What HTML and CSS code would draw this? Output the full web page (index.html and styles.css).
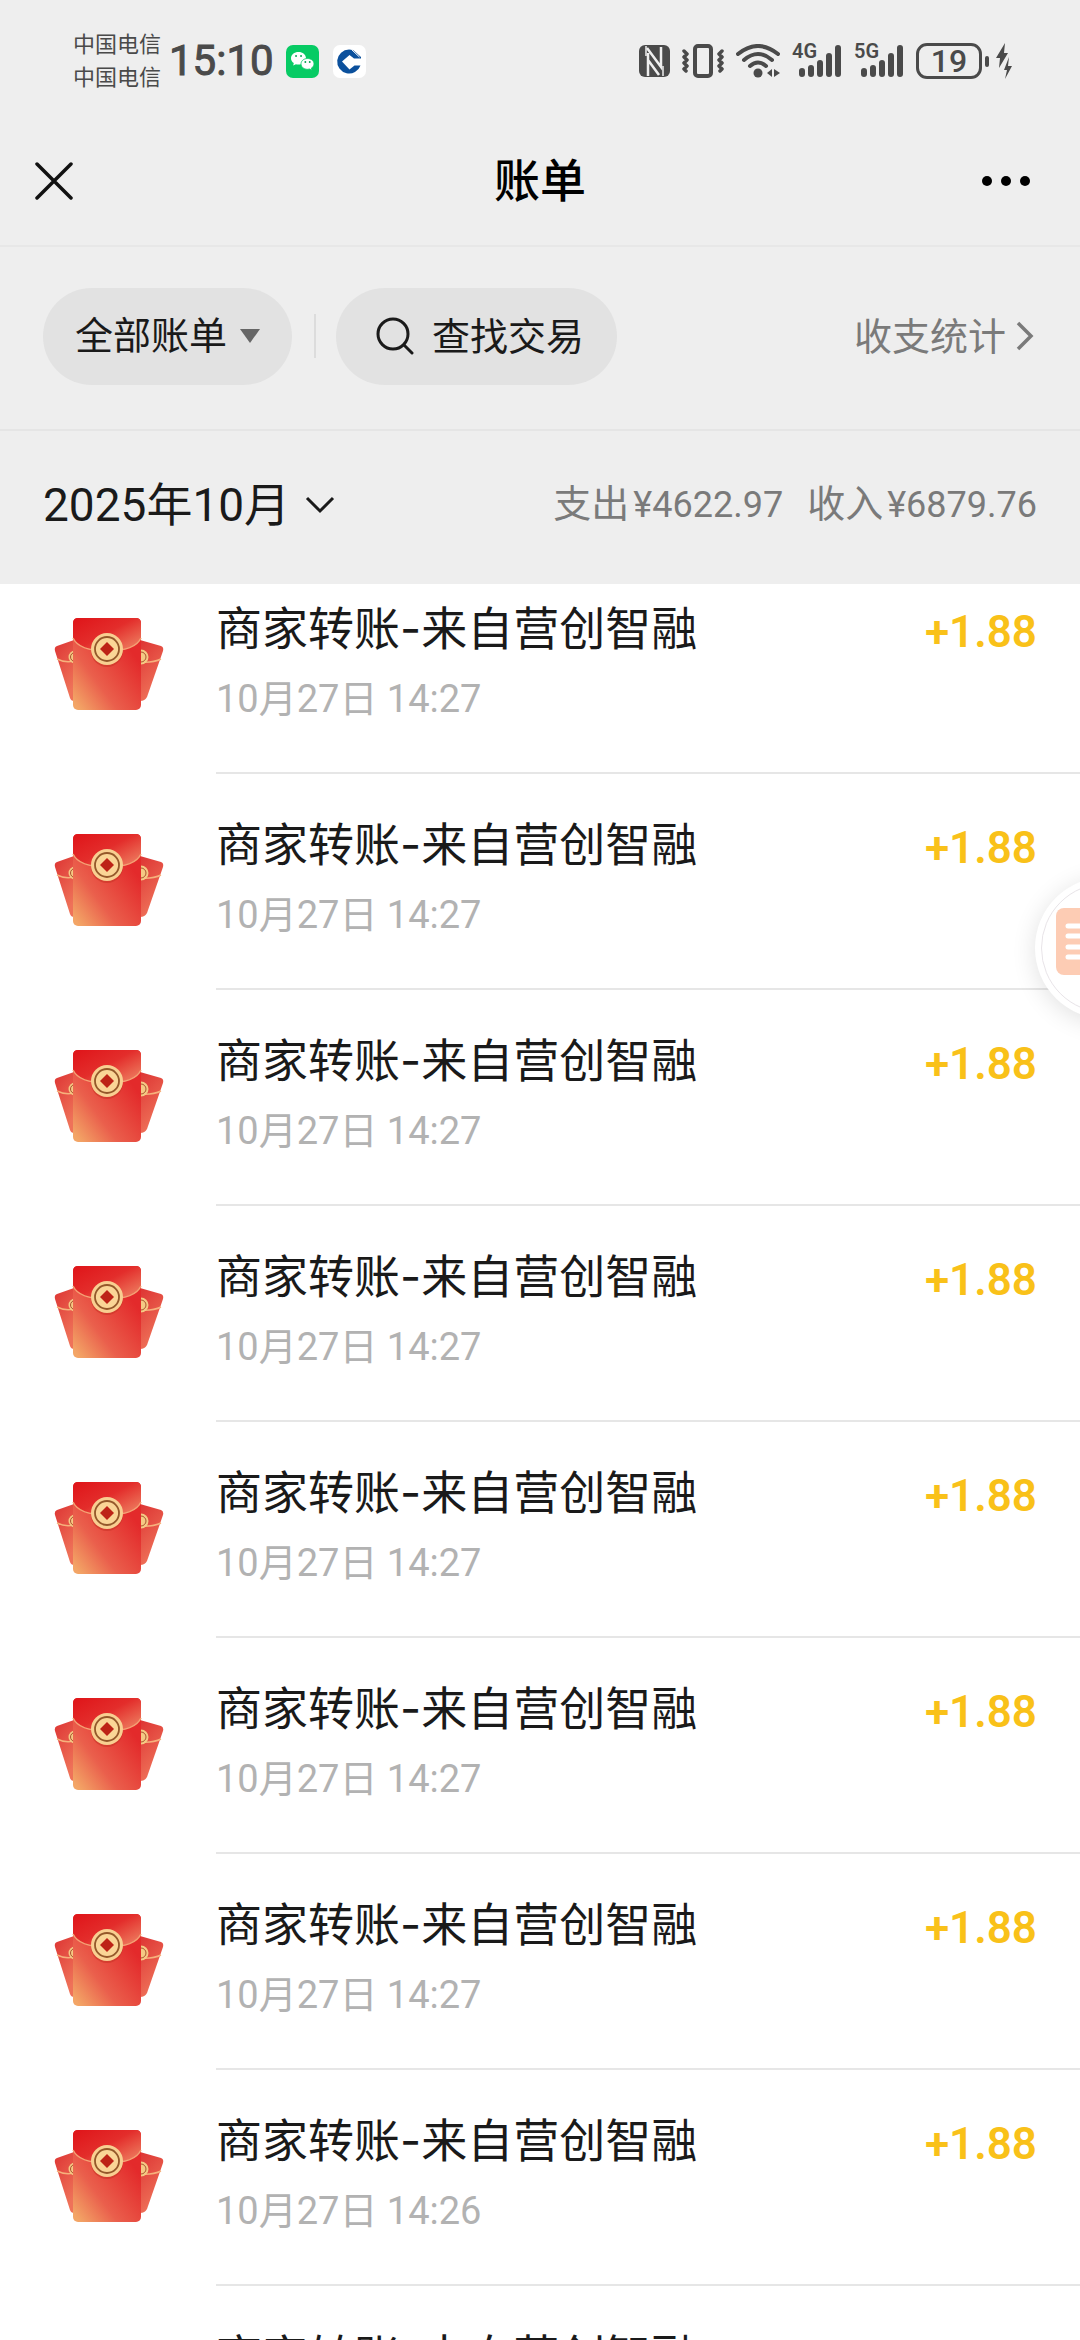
FILE: index.html
```html
<!DOCTYPE html>
<html lang="zh-CN">
<head>
    <meta charset="UTF-8" />
    <meta name="viewport" content="width=device-width, initial-scale=1.0" />
    <title>账单</title>
    <link rel="stylesheet" href="styles.css">
</head>
<body>

<!-- Icona busta rossa, usata in ogni riga -->
<svg class="defs" aria-hidden="true">
    <defs>
        <linearGradient id="body-red" x1="0.1" y1="1" x2="0.8" y2="0.3">
            <stop offset="0" stop-color="#f3a566" />
            <stop offset="0.4" stop-color="#ea5f4c" />
            <stop offset="1" stop-color="#e32a2b" />
        </linearGradient>
        <linearGradient id="flap-red" x1="0" y1="0" x2="1" y2="0.9">
            <stop offset="0" stop-color="#df1419" />
            <stop offset="0.5" stop-color="#e32d2b" />
            <stop offset="1" stop-color="#ee8263" />
        </linearGradient>
        <linearGradient id="side-red" x1="0" y1="0" x2="0.4" y2="1">
            <stop offset="0" stop-color="#dd3433" />
            <stop offset="1" stop-color="#ef7259" />
        </linearGradient>
        <symbol id="envelope" viewBox="0 0 110 92">
            <path d="M3 28 20 22V83Q17 83 16 80L1 33Q0 29 3 28Z" fill="url(#side-red)" />
            <path d="M107 28 86 22V83Q91 83 93 79L109 33Q110 29 107 28Z" fill="url(#side-red)" />
            <path d="M3 41Q11 45 20 43M107 41Q99 45 86 44" fill="none" stroke="#f6b17c" stroke-width="1.5" />
            <circle cx="21" cy="39" r="6.5" fill="#f5c984" />
            <circle cx="21" cy="39" r="4.5" fill="none" stroke="#a8542f" />
            <circle cx="87" cy="39" r="7.5" fill="#f5c984" />
            <circle cx="87" cy="39" r="5" fill="none" stroke="#a8542f" />
            <rect x="19" y="0" width="68" height="92" rx="5" fill="url(#body-red)" />
            <path d="M19 20V5Q19 0 24 0H82Q87 0 87 5V20Q81 33 53 33T19 20Z" fill="url(#flap-red)" />
            <path d="M19 20Q25 33 53 33T87 20" fill="none" stroke="#f4a174" stroke-width="1.5" />
            <circle cx="53" cy="33" r="16" fill="#c93426" opacity="0.6" />
            <circle cx="53" cy="31" r="16" fill="#f8cf91" />
            <circle cx="53" cy="31" r="12" fill="#fad596" stroke="#94582a" stroke-width="1.8" />
            <path d="M53 24 60 31 53 38 46 31Z" fill="#bd2317" />
        </symbol>
        <symbol id="signal" viewBox="0 0 50 36">
            <path d="M10 28V31M19 25V31M28 20V31M37 13V31M46 5V31" stroke="currentColor" stroke-width="6" stroke-linecap="round" />
        </symbol>
    </defs>
</svg>

<header class="header">
    <div class="status-bar">
        <div class="carriers">
            <span>中国电信</span>
            <span>中国电信</span>
        </div>
        <span class="clock">15:10</span>
        <svg class="app-icon" viewBox="0 0 33 33" aria-hidden="true">
            <rect width="33" height="33" rx="7" fill="#07cb64" />
            <path d="M12.5 7C8.3 7 5 9.7 5 13.2c0 2 1.1 3.7 2.8 4.900L7.200 20.500l2.700-1.300a10 10 0 0 0 2.600.3c4.200 0 7.500-2.800 7.500-6.300S16.700 7 12.500 7Z" fill="#fff" />
            <path d="M21.500 13.500c-3.700 0-6.500 2.400-6.500 5.400s2.800 5.400 6.500 5.400c.8 0 1.500-.1 2.200-.3l2.300 1.200-.6-2.100c1.600-1 2.600-2.500 2.600-4.200 0-3-2.800-5.400-6.500-5.400Z" fill="#fff" stroke="#07cb64" stroke-width="0.8" />
            <path d="M10 11h.1M15 11h.1M19.300 17h.1M23.700 17h.1" stroke="#07a552" stroke-width="1.8" stroke-linecap="round" />
        </svg>
        <svg class="app-icon" viewBox="0 0 33 33" aria-hidden="true">
            <rect width="33" height="33" rx="7" fill="#fff" />
            <path d="M16 5A12 12 0 1 0 27.500 21H21.500L16.500 25 9 17 16.500 10.500 21 14H28V12.500L20 5.500Z" transform="translate(0 -0.500)" fill="#0b509c" />
            <path d="M16.500 12 22 17 16.500 22 11 17Z" fill="#fff" />
            <path d="M18.500 4.500 26.500 12" stroke="#fff" stroke-width="1" />
        </svg>
        <div class="status-icons">
            <svg class="nfc" viewBox="0 0 31 32" aria-hidden="true">
                <rect width="31" height="32" rx="6" fill="#4a4a4a" />
                <path d="M7 1V11M24 21V31" stroke="#eee" stroke-width="1.5" />
                <path d="M9 31V8M8 3 22 22V2M9 15 20 30" fill="none" stroke="#eee" stroke-width="2.5" />
            </svg>
            <svg class="vibrate" viewBox="0 0 42 34" aria-hidden="true">
                <g fill="none" stroke="#4a4a4a" stroke-linecap="round" stroke-linejoin="round">
                    <rect x="13" y="2" width="16" height="30" rx="3" stroke-width="4" />
                    <path d="M2 7 5 10 2 13 5 16 2 19 5 22 2 25 4 27M40 7 37 10 40 13 37 16 40 19 37 22 40 25 38 27" stroke-width="3.5" />
                </g>
            </svg>
            <svg class="wifi" viewBox="0 0 44 34" aria-hidden="true">
                <g fill="none" stroke="#4a4a4a" stroke-width="4" stroke-linecap="round">
                    <path d="M2 10Q22-6 42 10" />
                    <path d="M8 16Q22 4 36 16" />
                    <path d="M14 22Q22 15 30 22" />
                </g>
                <circle cx="22" cy="29" r="4.5" fill="#4a4a4a" />
                <path d="M36 25V33L31 29ZM38 25V33L44 29Z" fill="#4a4a4a" />
            </svg>
            <span class="network"><svg aria-hidden="true"><use href="#signal" /></svg><b>4G</b></span>
            <span class="network"><svg aria-hidden="true"><use href="#signal" /></svg><b>5G</b></span>
            <span class="battery">19</span>
            <svg class="bolt" viewBox="0 0 16 36" aria-hidden="true">
                <path d="M9 0 0 15H4L3 25 12 10H8ZM13 14 8 27H11L9 36 16 23H12Z" fill="#4a4a4a" />
            </svg>
        </div>
    </div>

    <div class="nav-bar">
        <button class="icon-button" type="button" aria-label="关闭">
            <svg class="close" viewBox="0 0 38 38"><path d="M2 2 36 36M36 2 2 36" stroke="#111" stroke-width="3.5" stroke-linecap="round" /></svg>
        </button>
        <h1>账单</h1>
        <button class="icon-button" type="button" aria-label="更多">
            <svg class="more" viewBox="0 0 50 12"><circle cx="6" cy="6" r="5" /><circle cx="25" cy="6" r="5" /><circle cx="44" cy="6" r="5" /></svg>
        </button>
    </div>

    <div class="filter-bar">
        <div class="pill">
            <select class="type-select" aria-label="账单类型"><option>全部账单</option></select>
            <svg class="triangle" viewBox="0 0 20 14" aria-hidden="true"><path d="M0 0H20L10 14Z" fill="#666" /></svg>
        </div>
        <span class="divider"></span>
        <button class="pill search" type="button">
            <svg class="search-icon" viewBox="0 0 38 38" aria-hidden="true"><g fill="none" stroke="#1a1a1a" stroke-width="3"><circle cx="17" cy="17" r="15" /><path d="M28 28 36 36" stroke-linecap="round" /></g></svg>
            <span class="label">查找交易</span>
        </button>
        <a class="stats" href="#"><span class="label">收支统计</span><svg class="chevron" viewBox="0 0 18 30" aria-hidden="true"><path d="M2 2 15 15 2 28" fill="none" stroke="#7a7a7a" stroke-width="3.5" /></svg></a>
    </div>

    <div class="month-bar">
        <select class="month-select" aria-label="月份"><option>2025年10月</option></select>
        <svg class="arrow-down" viewBox="0 0 30 18" aria-hidden="true"><path d="M2 2 15 15 28 2" fill="none" stroke="#1a1a1a" stroke-width="3" /></svg>
        <div class="totals">
            <span>支出<span class="money">¥4622.97</span></span>
            <span>收入<span class="money">¥6879.76</span></span>
        </div>
    </div>
</header>

<ul class="bill-list">
    <li class="bill">
        <svg class="envelope" aria-hidden="true"><use href="#envelope" /></svg>
        <div class="info">
            <div class="text"><p class="name">商家转账<span class="dash">-</span>来自营创智融</p><p class="date">10月27日 14:27</p></div>
            <span class="amount">+1.88</span>
        </div>
    </li>
    <li class="bill">
        <svg class="envelope" aria-hidden="true"><use href="#envelope" /></svg>
        <div class="info">
            <div class="text"><p class="name">商家转账<span class="dash">-</span>来自营创智融</p><p class="date">10月27日 14:27</p></div>
            <span class="amount">+1.88</span>
        </div>
    </li>
    <li class="bill">
        <svg class="envelope" aria-hidden="true"><use href="#envelope" /></svg>
        <div class="info">
            <div class="text"><p class="name">商家转账<span class="dash">-</span>来自营创智融</p><p class="date">10月27日 14:27</p></div>
            <span class="amount">+1.88</span>
        </div>
    </li>
    <li class="bill">
        <svg class="envelope" aria-hidden="true"><use href="#envelope" /></svg>
        <div class="info">
            <div class="text"><p class="name">商家转账<span class="dash">-</span>来自营创智融</p><p class="date">10月27日 14:27</p></div>
            <span class="amount">+1.88</span>
        </div>
    </li>
    <li class="bill">
        <svg class="envelope" aria-hidden="true"><use href="#envelope" /></svg>
        <div class="info">
            <div class="text"><p class="name">商家转账<span class="dash">-</span>来自营创智融</p><p class="date">10月27日 14:27</p></div>
            <span class="amount">+1.88</span>
        </div>
    </li>
    <li class="bill">
        <svg class="envelope" aria-hidden="true"><use href="#envelope" /></svg>
        <div class="info">
            <div class="text"><p class="name">商家转账<span class="dash">-</span>来自营创智融</p><p class="date">10月27日 14:27</p></div>
            <span class="amount">+1.88</span>
        </div>
    </li>
    <li class="bill">
        <svg class="envelope" aria-hidden="true"><use href="#envelope" /></svg>
        <div class="info">
            <div class="text"><p class="name">商家转账<span class="dash">-</span>来自营创智融</p><p class="date">10月27日 14:27</p></div>
            <span class="amount">+1.88</span>
        </div>
    </li>
    <li class="bill">
        <svg class="envelope" aria-hidden="true"><use href="#envelope" /></svg>
        <div class="info">
            <div class="text"><p class="name">商家转账<span class="dash">-</span>来自营创智融</p><p class="date">10月27日 14:26</p></div>
            <span class="amount">+1.88</span>
        </div>
    </li>
    <li class="bill">
        <svg class="envelope" aria-hidden="true"><use href="#envelope" /></svg>
        <div class="info">
            <div class="text"><p class="name">商家转账<span class="dash">-</span>来自营创智融</p></div>
        </div>
    </li>
</ul>

<button class="float-button" type="button" aria-label="悬浮窗">
    <svg viewBox="0 0 130 130" aria-hidden="true">
        <circle cx="65" cy="65" r="64.5" fill="#fff" stroke="#e8e4e8" />
        <rect x="15" y="25" width="60" height="67" rx="8" fill="#fdccb4" />
        <path d="M27 43H65M27 53H65M27 64H65M27 74H65" stroke="#fff" stroke-width="5" stroke-linecap="round" />
    </svg>
</button>

</body>
</html>
```
FILE: styles.css
```css
* {
    box-sizing: border-box;
}

body {
    display: flex;
    flex-direction: column;
    height: 100vh;
    margin: 0;
    overflow: hidden;
    background: #fff;
    color: #1a1a1a;
    font-family: Roboto, "Noto Sans CJK SC", sans-serif;
    font-size: 38px;
}

button,
select {
    margin: 0;
    padding: 0;
    border: 0;
    background: none;
    color: inherit;
    font: inherit;
    appearance: none;
}

svg {
    display: block;
    flex: none;
}

.defs {
    position: absolute;
    width: 0;
    height: 0;
}

.header {
    position: relative;
    z-index: 1;
    flex: none;
    background: #eee;
}

/* Barra di stato */
.status-bar {
    display: flex;
    align-items: center;
    height: 116px;
    padding: 6px 68px 0 73px;
    color: #4a4a4a;
}

.carriers {
    display: flex;
    flex-direction: column;
    font-size: 22px;
    line-height: 33px;
}

.clock {
    margin: 0 12px 0 8px;
    font-size: 42px;
    line-height: 48px;
    -webkit-text-stroke: 1px;
}

.app-icon {
    width: 33px;
    height: 33px;
    margin-right: 14px;
}

.status-icons {
    display: flex;
    align-items: center;
    gap: 12px;
    margin-left: auto;
}

.nfc {
    width: 31px;
    height: 32px;
}

.vibrate {
    width: 42px;
    height: 34px;
}

.wifi {
    width: 44px;
    height: 34px;
}

.network {
    position: relative;
    width: 50px;
    height: 36px;
}

.network svg {
    width: 50px;
    height: 36px;
}

.network b {
    position: absolute;
    top: -3px;
    left: 0;
    font-size: 20px;
    font-weight: 600;
    line-height: 22px;
    background: #eee;
}

.battery {
    position: relative;
    width: 66px;
    height: 36px;
    margin-right: 2px;
    border: 3px solid #4a4a4a;
    border-radius: 11px;
    font-size: 32px;
    font-weight: 500;
    line-height: 31px;
    text-align: center;
}

.battery::after {
    content: "";
    position: absolute;
    top: 10px;
    right: -10px;
    width: 4px;
    height: 11px;
    border-radius: 2px;
    background: #4a4a4a;
}

.bolt {
    width: 16px;
    height: 36px;
}

/* Titolo */
.nav-bar {
    display: flex;
    align-items: center;
    justify-content: space-between;
    height: 131px;
    padding: 0 35px;
    border-bottom: 2px solid #e7e7e7;
}

.nav-bar h1 {
    margin: 0;
    color: #000;
    font-size: 46px;
    font-weight: 500;
    line-height: 60px;
}

.icon-button {
    display: flex;
    flex: 1;
}

.icon-button:last-child {
    justify-content: flex-end;
}

.close {
    width: 38px;
    height: 38px;
}

.more {
    width: 50px;
    height: 12px;
    margin-right: 14px;
}

/* Filtri */
.filter-bar {
    display: flex;
    align-items: center;
    height: 184px;
    padding: 0 46px 4px 43px;
    border-bottom: 2px solid #e5e5e5;
}

.pill {
    display: flex;
    align-items: center;
    height: 97px;
    padding: 0 32px;
    border-radius: 49px;
    background: #e2e2e2;
}

.type-select {
    height: 60px;
}

.triangle {
    width: 20px;
    height: 14px;
    margin-left: 12px;
}

.divider {
    width: 2px;
    height: 44px;
    margin: 0 20px 0 22px;
    background: #dcdcdc;
}

.search {
    gap: 18px;
    padding: 0 33px 0 40px;
}

.search-icon {
    width: 38px;
    height: 38px;
}

.label {
    padding-bottom: 6px;
}

.stats {
    display: flex;
    align-items: center;
    gap: 10px;
    margin-left: auto;
    color: #7a7a7a;
    text-decoration: none;
}

.chevron {
    width: 18px;
    height: 30px;
}

/* Mese e totali */
.month-bar {
    display: flex;
    align-items: center;
    height: 153px;
    padding: 0 43px 6px 43px;
}

.month-select {
    height: 66px;
    font-size: 46px;
}

.arrow-down {
    width: 30px;
    height: 18px;
    margin-left: 14px;
}

.totals {
    display: flex;
    gap: 24px;
    margin-left: auto;
    padding-bottom: 8px;
    color: #7a7a7a;
}

.money {
    margin-left: 4px;
    font-size: 36px;
}

/* Elenco movimenti, scorre sotto l'intestazione */
.bill-list {
    flex: 1;
    min-height: 0;
    margin: -26px 0 0;
    padding: 0;
    overflow: hidden;
    list-style: none;
}

.bill {
    display: flex;
    height: 216px;
    padding-left: 54px;
}

.envelope {
    width: 110px;
    height: 92px;
    margin: 60px 52px 0 0;
}

.info {
    display: flex;
    flex: 1;
    justify-content: space-between;
    padding: 40px 43px 0 0;
    border-bottom: 2px solid #e6e6e6;
}

.info p {
    margin: 0;
}

.name {
    font-size: 46px;
    line-height: 60px;
}

.dash {
    font-family: Inter, sans-serif;
}

.info .date {
    margin-top: 13px;
    color: #b2b2b2;
    line-height: 54px;
}

.amount {
    color: #f9c119;
    font-size: 44px;
    font-weight: 600;
    line-height: 68px;
}

.float-button {
    position: fixed;
    top: 877px;
    right: -97px;
    z-index: 2;
    padding: 6px;
    border-radius: 50%;
    background: #fff;
    box-shadow: 0 4px 24px rgba(0, 0, 0, 0.12);
}

.float-button svg {
    width: 130px;
    height: 130px;
}
```
